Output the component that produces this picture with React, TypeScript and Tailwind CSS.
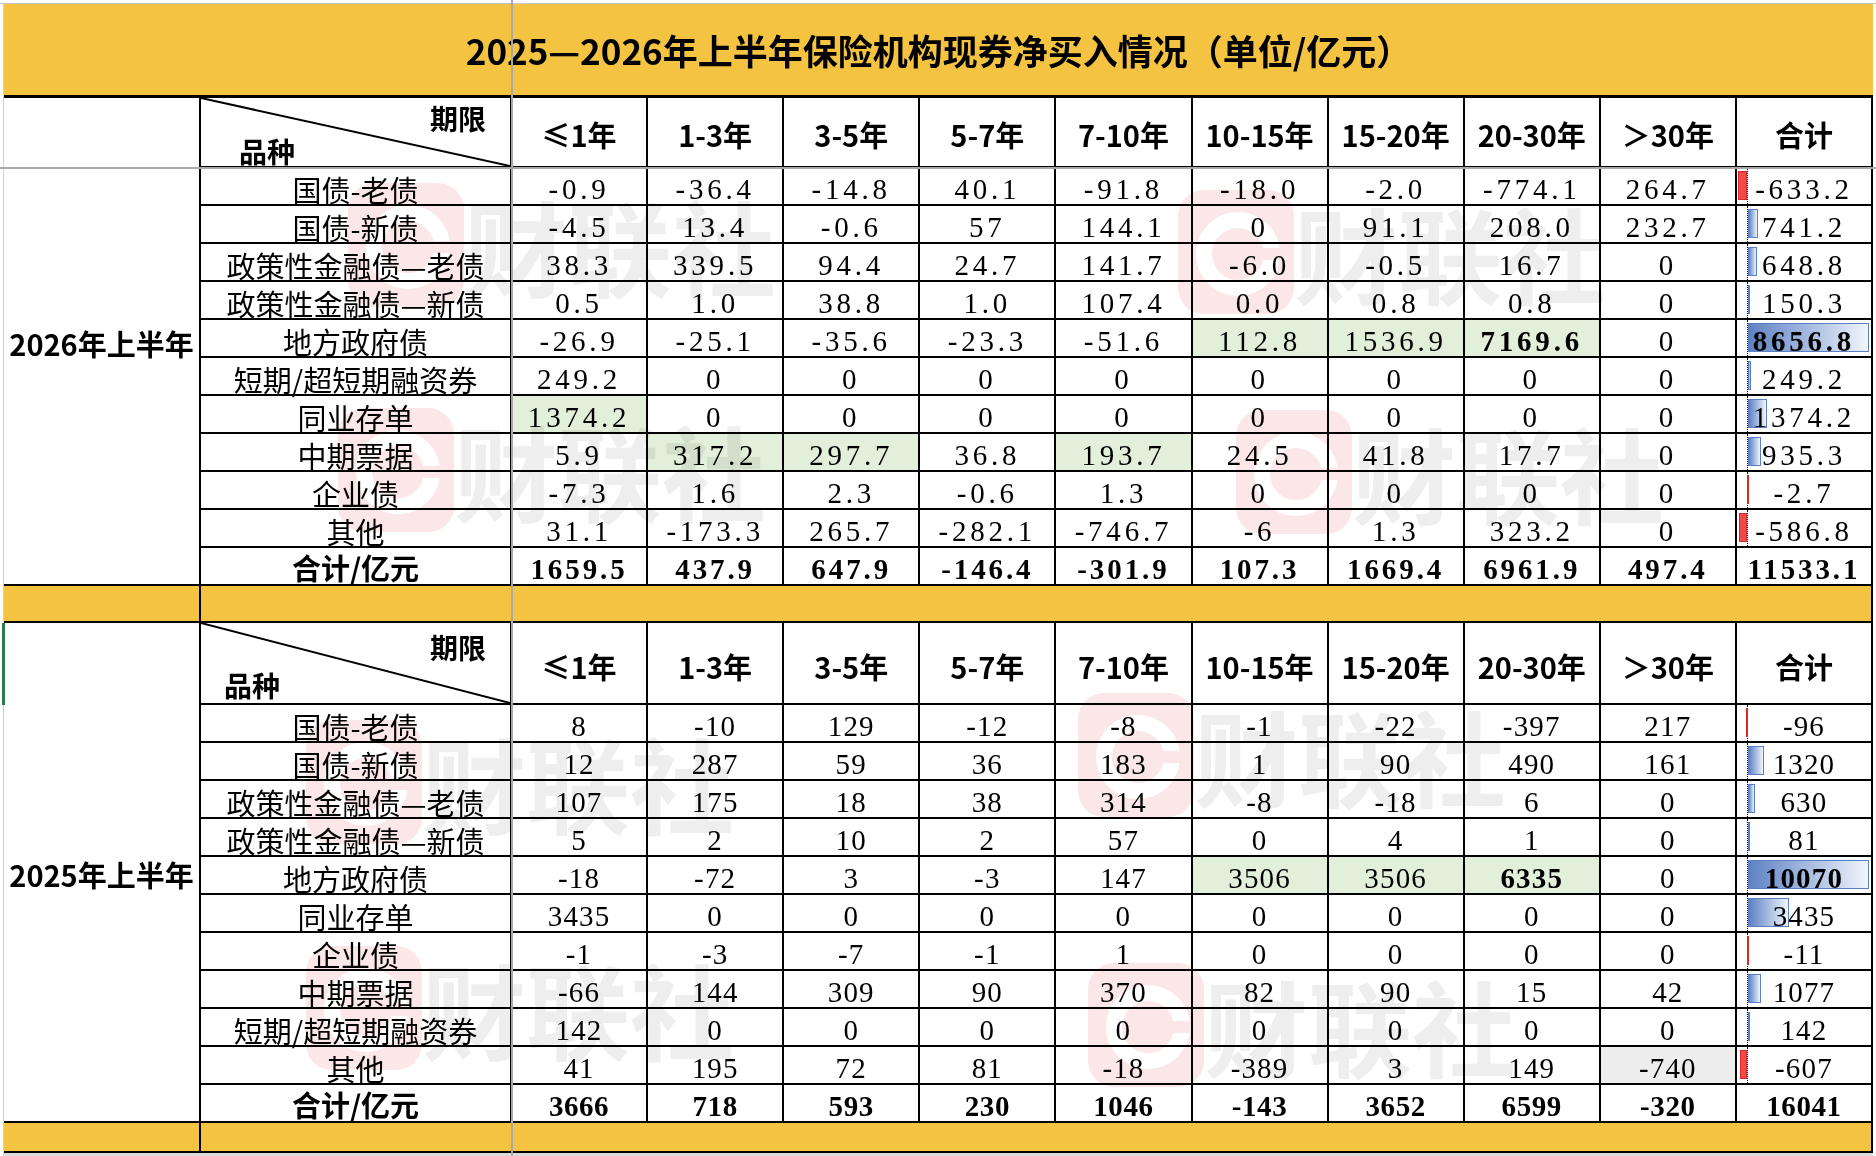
import React from "react";

type Spec = { v: string; g: boolean; b: boolean; x: boolean };

const parse = (s: string): Spec[] =>
  s.split(" ").map((t) => {
    const m = t.match(/^(-?[\d.]+)([gbx]*)$/);
    const v = m ? m[1] : t;
    const f = m ? m[2] : "";
    return { v, g: f.includes("g"), b: f.includes("b"), x: f.includes("x") };
  });

const HEAD = ["≤1年", "1-3年", "3-5年", "5-7年", "7-10年", "10-15年", "15-20年", "20-30年", "＞30年", "合计"];

const rows2026: [string, string][] = [
  ["国债-老债", "-0.9 -36.4 -14.8 40.1 -91.8 -18.0 -2.0 -774.1 264.7 -633.2"],
  ["国债-新债", "-4.5 13.4 -0.6 57 144.1 0 91.1 208.0 232.7 741.2"],
  ["政策性金融债—老债", "38.3 339.5 94.4 24.7 141.7 -6.0 -0.5 16.7 0 648.8"],
  ["政策性金融债—新债", "0.5 1.0 38.8 1.0 107.4 0.0 0.8 0.8 0 150.3"],
  ["地方政府债", "-26.9 -25.1 -35.6 -23.3 -51.6 112.8g 1536.9g 7169.6gb 0 8656.8b"],
  ["短期/超短期融资券", "249.2 0 0 0 0 0 0 0 0 249.2"],
  ["同业存单", "1374.2g 0 0 0 0 0 0 0 0 1374.2"],
  ["中期票据", "5.9 317.2g 297.7g 36.8 193.7g 24.5 41.8 17.7 0 935.3"],
  ["企业债", "-7.3 1.6 2.3 -0.6 1.3 0 0 0 0 -2.7"],
  ["其他", "31.1 -173.3 265.7 -282.1 -746.7 -6 1.3 323.2 0 -586.8"],
];
const total2026 = "1659.5 437.9 647.9 -146.4 -301.9 107.3 1669.4 6961.9 497.4 11533.1";

const rows2025: [string, string][] = [
  ["国债-老债", "8 -10 129 -12 -8 -1 -22 -397 217 -96"],
  ["国债-新债", "12 287 59 36 183 1 90 490 161 1320"],
  ["政策性金融债—老债", "107 175 18 38 314 -8 -18 6 0 630"],
  ["政策性金融债—新债", "5 2 10 2 57 0 4 1 0 81"],
  ["地方政府债", "-18 -72 3 -3 147 3506g 3506g 6335gb 0 10070b"],
  ["同业存单", "3435 0 0 0 0 0 0 0 0 3435"],
  ["企业债", "-1 -3 -7 -1 1 0 0 0 0 -11"],
  ["中期票据", "-66 144 309 90 370 82 90 15 42 1077"],
  ["短期/超短期融资券", "142 0 0 0 0 0 0 0 0 142"],
  ["其他", "41 195 72 81 -18 -389 3 149 -740x -607"],
];
const total2025 = "3666 718 593 230 1046 -143 3652 6599 -320 16041";

const SANS = "font-['Noto_Sans_CJK_SC','Noto_Sans',sans-serif]";
const SERIF = "font-['Liberation_Serif','Noto_Sans_CJK_SC',serif]";
const CELL = "border-r-2 border-b-2 border-black";

function NumCell({ c, track }: { c: Spec; track: string }) {
  const bg = c.g ? "bg-[#e2efda]" : c.x ? "bg-[#ededed]" : "";
  return (
    <div
      className={`flex items-center justify-center pt-[7px] text-[29px] leading-none ${SERIF} ${track} ${CELL} ${bg} ${
        c.b ? "font-bold" : ""
      }`}
    >
      {c.v}
    </div>
  );
}

function SumCell({ c, max, track }: { c: Spec; max: number; track: string }) {
  const n = parseFloat(c.v);
  const len = (Math.abs(n) / max) * 121;
  return (
    <div
      className={`relative flex items-center justify-center pt-[7px] text-[29px] leading-none ${SERIF} ${track} ${CELL} ${
        c.b ? "font-bold" : ""
      }`}
    >
      <div className="absolute left-[10px] top-0 bottom-0 border-l border-dotted border-black" />
      {n > 0 && (
        <div
          className="absolute left-[11px] top-[3px] h-[29px] border border-[#5b7fc4] bg-linear-to-r from-[#5f82c3] to-[#f2f5fb]"
          style={{ width: len }}
        />
      )}
      {n < 0 && (
        <div
          className="absolute top-[3px] h-[29px] border border-[#e02525] bg-[#f24a4a]"
          style={{ width: len, left: 10 - len }}
        />
      )}
      <span className="relative">{c.v}</span>
    </div>
  );
}

function Section({
  year,
  rows,
  total,
  max,
  track,
  totalTrack,
  tall,
}: {
  year: string;
  rows: [string, string][];
  total: string;
  max: number;
  track: string;
  totalTrack: string;
  tall: boolean;
}) {
  const tot = parse(total);
  return (
    <div
      className={`grid grid-cols-[197px_311px_repeat(10,minmax(0,1fr))] ${
        tall ? "grid-rows-[82px_repeat(11,38px)]" : "grid-rows-[70px_repeat(11,38px)]"
      }`}
    >
      <div
        className={`col-start-1 row-start-1 row-span-12 flex items-center justify-center pt-[4px] text-[29px] font-bold leading-none text-black ${SANS} ${CELL}`}
      >
        {year}
      </div>
      <div className={`relative flex flex-col justify-between ${CELL}`}>
        <svg className="absolute inset-0 h-full w-full" preserveAspectRatio="none" viewBox="0 0 100 100">
          <line x1="0" y1="0" x2="100" y2="100" stroke="#000" strokeWidth="2" vectorEffect="non-scaling-stroke" />
        </svg>
        <span
          className={`self-end text-[28px] font-bold leading-none ${SANS} ${
            tall ? "pr-[24px] pt-[10px]" : "pr-[24px] pt-[6px]"
          }`}
        >
          期限
        </span>
        <span
          className={`self-start text-[28px] font-bold leading-none ${SANS} ${
            tall ? "pl-[23px] pb-[4px]" : "pl-[38px] pb-[1px]"
          }`}
        >
          品种
        </span>
      </div>
      {HEAD.map((h) => (
        <div
          key={h}
          className={`flex items-center justify-center text-[29px] font-bold leading-none ${SANS} ${CELL} ${
            tall ? "pt-[6px]" : "pt-[4px]"
          }`}
        >
          {h}
        </div>
      ))}
      {rows.map(([label, vals]) => {
        const cs = parse(vals);
        return (
          <React.Fragment key={label}>
            <div className={`flex items-center justify-center pt-[7px] text-[29px] leading-none ${SANS} ${CELL}`}>
              {label}
            </div>
            {cs.slice(0, 9).map((c, i) => (
              <NumCell key={i} c={c} track={track} />
            ))}
            <SumCell c={cs[9]} max={max} track={track} />
          </React.Fragment>
        );
      })}
      <div className={`flex items-center justify-center pt-[2px] text-[29px] font-bold leading-none ${SANS} ${CELL}`}>
        合计/亿元
      </div>
      {tot.map((c, i) => (
        <div
          key={i}
          className={`flex items-center justify-center pt-[7px] text-[29px] font-bold leading-none ${SERIF} ${totalTrack} ${CELL}`}
        >
          {c.v}
        </div>
      ))}
    </div>
  );
}

function Logo() {
  return (
    <svg width="116" height="124" viewBox="0 0 116 124" className="shrink-0">
      <rect x="0" y="0" width="116" height="124" rx="26" fill="#fbe7e7" />
      <circle cx="60" cy="64" r="34" fill="none" stroke="#ffffff" strokeWidth="16" />
      <rect x="78" y="58" width="30" height="12" fill="#fbe7e7" />
    </svg>
  );
}

function WMText() {
  return (
    <span className={`text-[104px] font-bold leading-none text-[#eeeeee] ${SANS}`}>财联社</span>
  );
}

function Band({ h }: { h: string }) {
  return (
    <div className={`grid grid-cols-[197px_1fr] ${h}`}>
      <div className="border-r-2 border-b-2 border-black bg-[#f4c342]" />
      <div className="border-r-2 border-b-2 border-black bg-[#f4c342]" />
    </div>
  );
}

export default function App() {
  return (
    <div className="relative h-[1156px] w-[1876px] overflow-hidden bg-white text-black">
      <div className="h-[4px] border-b border-[#c6c6c6] bg-white" />
      <div className="flex">
        <div className="w-[4px] shrink-0 border-r border-[#d0d0d0] bg-white" />
        <div className="w-[1869px] shrink-0">
          <div className="flex h-[94px] items-center justify-center border-b-[3px] border-black bg-[#f4c342]">
            <span className={`text-[35px] font-bold leading-none ${SANS}`}>
              2025—2026年上半年保险机构现券净买入情况（单位/亿元）
            </span>
          </div>
          <Section
            year="2026年上半年"
            rows={rows2026}
            total={total2026}
            max={8656.8}
            track="tracking-[0.13em]"
            totalTrack="tracking-[0.1em]"
            tall={false}
          />
          <Band h="h-[37px]" />
          <Section
            year="2025年上半年"
            rows={rows2025}
            total={total2025}
            max={10070}
            track="tracking-[0.04em]"
            totalTrack="tracking-[0.02em]"
            tall={true}
          />
          <Band h="h-[30px]" />
          <div className="h-[3px] bg-[#dcdcdc]" />
        </div>
        <div className="w-[3px] shrink-0 bg-white" />
      </div>

      {/* watermarks */}
      <div className="pointer-events-none absolute left-[348px] top-[183px] flex items-center mix-blend-multiply">
        <Logo />
        <WMText />
      </div>
      <div className="pointer-events-none absolute left-[1178px] top-[190px] flex items-center mix-blend-multiply">
        <Logo />
        <WMText />
      </div>
      <div className="pointer-events-none absolute left-[338px] top-[408px] flex items-center mix-blend-multiply">
        <Logo />
        <WMText />
      </div>
      <div className="pointer-events-none absolute left-[1236px] top-[410px] flex items-center mix-blend-multiply">
        <Logo />
        <WMText />
      </div>
      <div className="pointer-events-none absolute left-[1078px] top-[693px] flex items-center mix-blend-multiply">
        <Logo />
        <WMText />
      </div>
      <div className="pointer-events-none absolute left-[306px] top-[720px] flex items-center mix-blend-multiply">
        <Logo />
        <WMText />
      </div>
      <div className="pointer-events-none absolute left-[306px] top-[946px] flex items-center mix-blend-multiply">
        <Logo />
        <WMText />
      </div>
      <div className="pointer-events-none absolute left-[1088px] top-[963px] flex items-center mix-blend-multiply">
        <Logo />
        <WMText />
      </div>

      {/* freeze-pane lines */}
      <div className="pointer-events-none absolute left-[511px] top-0 h-full w-[2px] bg-[#a8a8a8]" />
      <div className="pointer-events-none absolute left-0 top-[167px] h-[2px] w-full bg-[#a8a8a8]" />
      <div className="pointer-events-none absolute left-[2px] top-[623px] h-[82px] w-[3px] bg-[#2f7a4c]" />
    </div>
  );
}
